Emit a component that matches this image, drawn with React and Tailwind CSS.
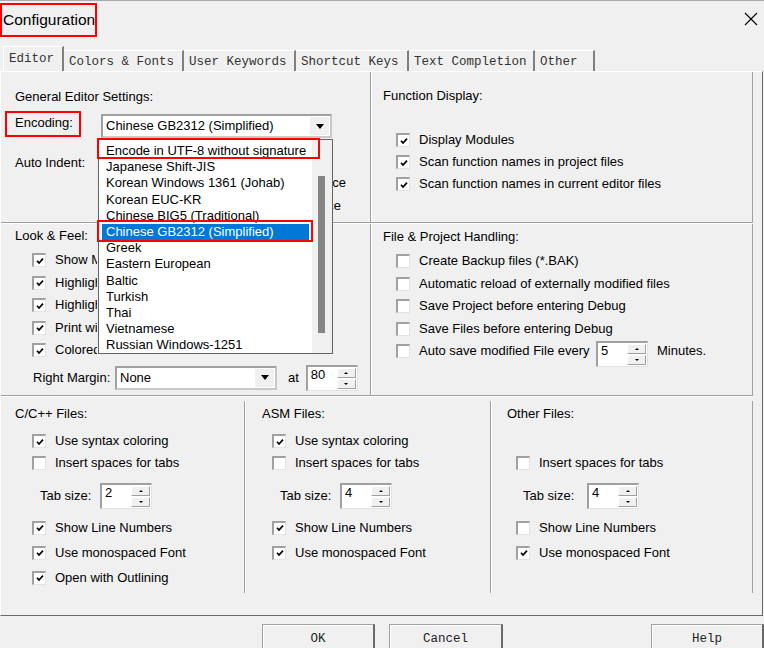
import React from "react";

const Box = ({ checked }) => (
  <span className="flex items-center justify-center w-[14px] h-[14px] shrink-0 bg-white border-t-2 border-l-2 border-r border-b border-t-[#a0a0a0] border-l-[#a0a0a0] border-r-[#e3e3e3] border-b-[#e3e3e3]">
    {checked && (
      <svg width="8" height="8" viewBox="0 0 8 8">
        <path d="M1 3.8 L3 6 L7 1.6" fill="none" stroke="#000" strokeWidth="1.7" />
      </svg>
    )}
  </span>
);

const CheckRow = ({ checked, label, h = "h-[22px]", clip = "" }) => (
  <div className={`flex items-center ${h}`}>
    <Box checked={checked} />
    <span className={`ml-[9px] whitespace-nowrap ${clip}`}>{label}</span>
  </div>
);

const Arrow = ({ up }) => (
  <svg width="4" height="2" viewBox="0 0 4 2">
    <path d={up ? "M2 0 L4 2 H0Z" : "M0 0 H4 L2 2Z"} fill="#000" />
  </svg>
);

const Spin = ({ value }) => (
  <div className="flex h-[26px] w-[52px] shrink-0 bg-white border-t-2 border-l-2 border-r border-b border-t-[#a0a0a0] border-l-[#a0a0a0] border-r-[#e3e3e3] border-b-[#e3e3e3]">
    <span className="flex-1 pl-[3px] leading-[16px]">{value}</span>
    <div className="flex flex-col w-[19px] my-[1px] mr-[1px] gap-[1px]">
      <div className="flex-1 flex items-center justify-center bg-[#f0f0f0] border border-t-white border-l-white border-r-[#a0a0a0] border-b-[#a0a0a0]">
        <Arrow up />
      </div>
      <div className="flex-1 flex items-center justify-center bg-[#f0f0f0] border border-t-white border-l-white border-r-[#a0a0a0] border-b-[#a0a0a0]">
        <Arrow />
      </div>
    </div>
  </div>
);

const Combo = ({ value, className }) => (
  <div className={`flex h-[24px] shrink-0 bg-white border-2 border-t-[#a0a0a0] border-l-[#a0a0a0] border-r-[#c8c8c8] border-b-[#c8c8c8] ${className}`}>
    <span className="flex-1 pl-[3px] self-center whitespace-nowrap">{value}</span>
    <div className="w-[19px] my-[1px] mr-[1px] flex items-center justify-center bg-[#f0f0f0]">
      <svg width="8" height="5" viewBox="0 0 8 5">
        <path d="M0 0 H8 L4 5Z" fill="#000" />
      </svg>
    </div>
  </div>
);

const encodings = [
  "Encode in UTF-8 without signature",
  "Japanese Shift-JIS",
  "Korean Windows 1361 (Johab)",
  "Korean EUC-KR",
  "Chinese BIG5 (Traditional)",
  "Chinese GB2312 (Simplified)",
  "Greek",
  "Eastern European",
  "Baltic",
  "Turkish",
  "Thai",
  "Vietnamese",
  "Russian Windows-1251",
];

const tabs = [
  { name: "Colors & Fonts", w: "w-[120px]" },
  { name: "User Keywords", w: "w-[112px]" },
  { name: "Shortcut Keys", w: "w-[113px]" },
  { name: "Text Completion", w: "w-[126px]" },
  { name: "Other", w: "w-[60px]" },
];

// labels partly hidden behind the open drop-down
const lookFeel = [
  "Show Message Dialogs",
  "Highlight Current Line",
  "Highlight matching braces",
  "Print with syntax coloring",
  "Colored Editor Tabs",
];

const App = () => {
  return (
    <div className="relative w-[764px] h-[648px] overflow-hidden bg-[#f0f0f0] border-t border-t-[#a9a9a9] font-['Liberation_Sans',Arial,sans-serif] text-[13px] leading-[16px] text-black">
      {/* title bar */}
      <div className="flex h-[45px]">
        <div className="mt-[2px] h-[34px] w-[97px] border-2 border-[#ff0000] pl-[1px] flex items-center text-[15.5px] leading-[20px] whitespace-nowrap">
          Configuration
        </div>
        <svg className="ml-auto mr-[6px] mt-[11px]" width="14" height="14" viewBox="0 0 14 14">
          <path d="M1 1 L13 13 M13 1 L1 13" stroke="#000" strokeWidth="1.1" />
        </svg>
      </div>

      {/* tabs */}
      <div className="flex items-end h-[25px] pl-[3px] font-['Liberation_Mono',monospace] text-[12.5px] text-[#333]">
        <div className="w-[61px] h-[25px] pl-[5px] pt-[4px] border-t border-l border-r-2 border-t-white border-l-white border-r-[#808080]">
          Editor
        </div>
        {tabs.map((t) => (
          <div
            key={t.name}
            className={`${t.w} h-[21px] pl-[5px] pt-[3px] whitespace-nowrap border-t border-r-2 border-t-white border-r-[#808080]`}
          >
            {t.name}
          </div>
        ))}
      </div>

      {/* panel */}
      <div className="w-[763px] h-[545px] border border-t-white border-l-white border-r-[#696969] border-b-[#696969]">
        <div className="w-[752px] flex flex-col">
          {/* top row */}
          <div className="flex h-[151px] border-b border-b-[#a0a0a0]">
            <div className="w-[370px] border-r border-r-[#a0a0a0] pl-[14px] pt-[17px]">
              <div>General Editor Settings:</div>
              <div className="flex items-start mt-[6px] -ml-[10px]">
                <div className="w-[76px] h-[26px] border-2 border-[#ff0000] pl-[8px] pt-[2px]">Encoding:</div>
                <Combo value="Chinese GB2312 (Simplified)" className="ml-[20px] mt-[3px] w-[231px]" />
              </div>
              <div className="mt-[17px]">Auto Indent:</div>
              <div className="mt-[4px] ml-[318px] w-[13px] flex justify-end overflow-hidden">
                <span className="whitespace-nowrap">Virtual Space</span>
              </div>
              <div className="mt-[7px] ml-[318px] w-[8px] flex justify-end overflow-hidden">
                <span className="whitespace-nowrap">View White Space</span>
              </div>
            </div>
            <div className="flex-1 border-l border-r border-l-white border-r-[#a0a0a0] pl-[11px] pt-[16px]">
              <div>Function Display:</div>
              <div className="mt-[25px] pl-[13px]">
                <CheckRow checked label="Display Modules" />
                <CheckRow checked label="Scan function names in project files" />
                <CheckRow checked label="Scan function names in current editor files" />
              </div>
            </div>
          </div>

          {/* middle row */}
          <div className="flex h-[173px] border-t border-b border-t-white border-b-[#a0a0a0]">
            <div className="w-[370px] border-r border-r-[#a0a0a0] pl-[14px] pt-[4px]">
              <div>Look &amp; Feel:</div>
              <div className="mt-[5px] pl-[17px]">
                {lookFeel.map((l) => (
                  <CheckRow key={l} checked h="h-[22.5px]" label={l} clip="w-[42px] overflow-hidden" />
                ))}
              </div>
              <div className="mt-[4px] pl-[18px] flex items-center h-[24px]">
                <span className="w-[82px] whitespace-nowrap">Right Margin:</span>
                <Combo value="None" className="w-[162px]" />
                <span className="ml-[11px]">at</span>
                <div className="ml-[7px]">
                  <Spin value="80" />
                </div>
              </div>
            </div>
            <div className="flex-1 border-l border-r border-l-white border-r-[#a0a0a0] pl-[11px] pt-[5px]">
              <div>File &amp; Project Handling:</div>
              <div className="mt-[5px] pl-[13px]">
                <CheckRow h="h-[22.5px]" label="Create Backup files (*.BAK)" />
                <CheckRow h="h-[22.5px]" label="Automatic reload of externally modified files" />
                <CheckRow h="h-[22.5px]" label="Save Project before entering Debug" />
                <CheckRow h="h-[22.5px]" label="Save Files before entering Debug" />
                <div className="flex items-center h-[22.5px]">
                  <Box />
                  <span className="ml-[9px] w-[177px] whitespace-nowrap">Auto save modified File every</span>
                  <div className="mt-[6px]">
                    <Spin value="5" />
                  </div>
                  <span className="ml-[9px]">Minutes.</span>
                </div>
              </div>
            </div>
          </div>

          {/* bottom row */}
          <div className="flex h-[205px] border-t border-t-white">
            <div className="w-[244px] mt-[4px] h-[192px] border-r border-r-[#a0a0a0] pl-[14px] pt-[5px]">
              <div>C/C++ Files:</div>
              <div className="mt-[8px] pl-[17px]">
                <CheckRow checked label="Use syntax coloring" />
                <CheckRow label="Insert spaces for tabs" />
              </div>
              <div className="mt-[9px] pl-[25px] flex items-center h-[26px]">
                <span className="w-[60px]">Tab size:</span>
                <Spin value="2" />
              </div>
              <div className="mt-[6px] pl-[17px]">
                <CheckRow checked h="h-[25px]" label="Show Line Numbers" />
                <CheckRow checked h="h-[25px]" label="Use monospaced Font" />
                <CheckRow checked h="h-[25px]" label="Open with Outlining" />
              </div>
            </div>
            <div className="w-[246px] mt-[4px] h-[192px] border-l border-r border-l-white border-r-[#a0a0a0] pl-[16px] pt-[5px]">
              <div>ASM Files:</div>
              <div className="mt-[8px] pl-[10px]">
                <CheckRow checked label="Use syntax coloring" />
                <CheckRow label="Insert spaces for tabs" />
              </div>
              <div className="mt-[9px] pl-[18px] flex items-center h-[26px]">
                <span className="w-[60px]">Tab size:</span>
                <Spin value="4" />
              </div>
              <div className="mt-[6px] pl-[10px]">
                <CheckRow checked h="h-[25px]" label="Show Line Numbers" />
                <CheckRow checked h="h-[25px]" label="Use monospaced Font" />
              </div>
            </div>
            <div className="flex-1 mt-[4px] h-[192px] border-l border-r border-l-white border-r-[#a0a0a0] pl-[15px] pt-[5px]">
              <div>Other Files:</div>
              <div className="mt-[8px] pl-[9px]">
                <div className="h-[22px]" />
                <CheckRow label="Insert spaces for tabs" />
              </div>
              <div className="mt-[9px] pl-[16px] flex items-center h-[26px]">
                <span className="w-[64px]">Tab size:</span>
                <Spin value="4" />
              </div>
              <div className="mt-[6px] pl-[9px]">
                <CheckRow h="h-[25px]" label="Show Line Numbers" />
                <CheckRow checked h="h-[25px]" label="Use monospaced Font" />
              </div>
            </div>
          </div>
        </div>
      </div>

      {/* buttons */}
      <div className="flex mt-[8px] font-['Liberation_Mono',monospace] text-[12.5px] text-[#222]">
        {[
          { t: "OK", c: "ml-[262px] w-[113px]" },
          { t: "Cancel", c: "ml-[14px] w-[114px]" },
          { t: "Help", c: "ml-[148px] w-[113px]" },
        ].map((b) => (
          <div
            key={b.t}
            className={`${b.c} h-[30px] pt-[6px] text-center bg-[#f0f0f0] border border-r-2 border-t-[#a0a0a0] border-l-[#a0a0a0] border-r-[#696969] shadow-[inset_1px_1px_0_#ffffff]`}
          >
            {b.t}
          </div>
        ))}
      </div>

      {/* open encoding drop-down list */}
      <div className="absolute left-[98px] top-[138px] w-[235px] h-[215px] bg-white border border-[#646464] flex z-10">
        <div className="flex-1 overflow-hidden pt-[3px]">
          {encodings.map((e) => (
            <div
              key={e}
              className={`mx-[3px] pl-[4px] h-[16.2px] leading-[16.2px] whitespace-nowrap ${
                e === "Chinese GB2312 (Simplified)" ? "bg-[#0078d7] text-white" : ""
              }`}
            >
              {e}
            </div>
          ))}
        </div>
        <div className="w-[20px] bg-[#f0f0f0] flex flex-col">
          <div className="mt-[36px] ml-[6px] w-[7px] h-[157px] bg-[#858585]" />
        </div>
      </div>

      {/* annotation boxes */}
      <div className="absolute left-[97px] top-[137px] w-[223px] h-[21px] border-2 border-[#ff0000] z-20" />
      <div className="absolute left-[97px] top-[219px] w-[216px] h-[22px] border-2 border-[#ff0000] z-20" />
    </div>
  );
};

export default App;
